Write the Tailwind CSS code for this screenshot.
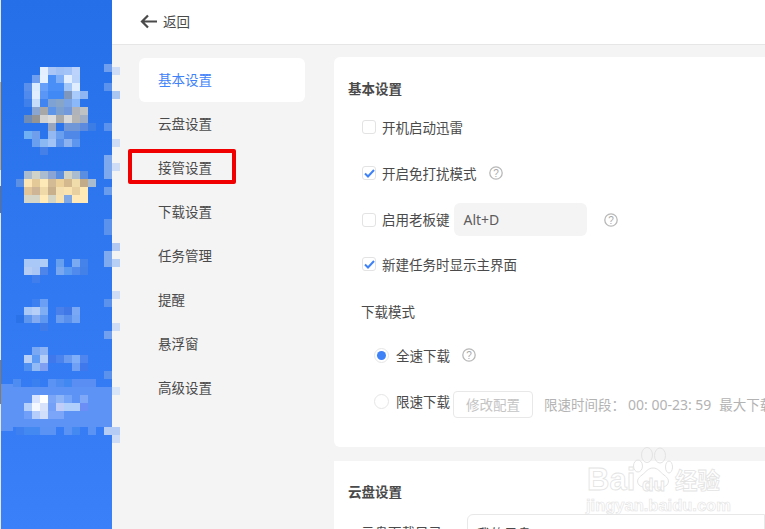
<!DOCTYPE html>
<html lang="zh">
<head>
    <meta charset="UTF-8" />
    <title>设置</title>
    <script src="https://cdn.jsdelivr.net/npm/@tailwindcss/browser@4"></script>
</head>
<body class="font-['Noto_Sans_CJK_SC',sans-serif] text-[13.5px] text-[#4a4a4a]">
<div class="relative flex h-[529px] w-[765px] overflow-hidden bg-[#f4f4f4]">

    <!-- blurred sidebar -->
    <svg class="w-[112px] h-[529px] shrink-0" viewBox="0 0 112 529" id="sidebar">
        <defs>
            <linearGradient id="side" x1="0" y1="0" x2="0" y2="1">
                <stop offset="0" stop-color="#2570e9" />
                <stop offset="1" stop-color="#3a80f8" />
            </linearGradient>
        </defs>
        <rect width="112" height="529" fill="url(#side)" />
        <rect width="1" height="529" fill="#e6e6e6" />
        <rect y="82" width="1" height="88" fill="#c8a560" />
        <rect y="186" width="1" height="27" fill="#6a6f78" />
        <rect y="360" width="1" height="44" fill="#8a7a60" />
        <rect x="1" y="387" width="111" height="40" fill="#5d93f5" />
        <rect x="1" y="384" width="12" height="47" fill="#5d93f5" />
        <g id="cells"></g>
    </svg>

    <!-- mosaic cells that spill over the sidebar edge -->
    <svg class="absolute left-[112px] top-0 w-[8px] h-[529px]" viewBox="0 0 8 529">
        <rect y="67" width="8" height="8" fill="#cfdcf5" />
        <rect y="91" width="8" height="8" fill="#a9c6f2" />
        <rect y="139" width="8" height="8" fill="#cfdcf5" />
        <rect y="163" width="8" height="8" fill="#cfdcf5" />
        <rect y="243" width="8" height="8" fill="#b0c8f2" />
        <rect y="259" width="8" height="8" fill="#b8cff5" />
        <rect y="291" width="8" height="8" fill="#cfdcf5" />
        <rect y="323" width="8" height="8" fill="#cfdcf5" />
        <rect y="387" width="8" height="8" fill="#d8e4f8" />
        <rect y="427" width="8" height="8" fill="#b5cdf5" />
        <rect y="435" width="8" height="8" fill="#cfdcf5" />
    </svg>

    <div class="flex-1 flex flex-col min-w-0">
        <!-- top bar -->
        <div class="h-[45px] shrink-0 bg-white border-b border-[#e6e6e6] flex items-center pl-[28px] pb-[2px] gap-[6px]">
            <svg class="w-[17px] h-[15px] text-[#4a4a4a]" viewBox="0 0 17 15" fill="none" stroke="currentColor" stroke-width="2.200">
                <path d="M17 7.500H2M8 1.500 2 7.500l6 6" />
            </svg>
            <span>返回</span>
        </div>

        <div class="flex flex-1 min-h-0">
            <!-- settings nav -->
            <div class="w-[222px] shrink-0 pl-[27px] pr-[29px] pt-[13px] flex flex-col">
                <div class="h-[44px] shrink-0 flex items-center pl-[19px] pb-[2px] bg-white rounded-md text-[#3f82f8]">基本设置</div>
                <div class="h-[44px] shrink-0 flex items-center pl-[19px] pb-[2px]">云盘设置</div>
                <div class="h-[44px] shrink-0 flex items-center pl-[19px] pb-[2px]">接管设置</div>
                <div class="h-[44px] shrink-0 flex items-center pl-[19px] pb-[2px]">下载设置</div>
                <div class="h-[44px] shrink-0 flex items-center pl-[19px] pb-[2px]">任务管理</div>
                <div class="h-[44px] shrink-0 flex items-center pl-[19px] pb-[2px]">提醒</div>
                <div class="h-[44px] shrink-0 flex items-center pl-[19px] pb-[2px]">悬浮窗</div>
                <div class="h-[44px] shrink-0 flex items-center pl-[19px] pb-[2px]">高级设置</div>
            </div>

            <!-- content -->
            <div class="flex-1 min-w-0 pt-[12px] flex flex-col gap-[14px]">
                <div class="h-[390px] shrink-0 bg-white rounded-l-md pl-[14px] pt-[21px] overflow-hidden">
                    <div class="font-bold leading-[20px]">基本设置</div>
                    <div class="pl-[14px] pt-[19px]">
                        <div class="h-[20px] flex items-center gap-[6px]">
                            <span class="w-[14px] h-[14px] shrink-0 rounded-[3px] border border-[#e3e3e3] bg-white"></span>
                            <span>开机启动迅雷</span>
                        </div>
                        <div class="h-[20px] mt-[26px] flex items-center gap-[6px]">
                            <span class="w-[14px] h-[14px] shrink-0 rounded-[3px] border border-[#e3e3e3] bg-white flex items-center justify-center">
                                <svg class="w-[11px] h-[9px]" viewBox="0 0 11 9" fill="none" stroke="#3f82f8" stroke-width="2"><path d="M1 4.500 4 7.500 10 1" /></svg>
                            </span>
                            <span>开启免打扰模式</span>
                            <svg class="w-[14px] h-[14px] ml-[6px] shrink-0" viewBox="0 0 14 14" fill="none"><circle cx="7" cy="7" r="6.200" stroke="#b8b8b8" stroke-width="1.300" /><text x="7" y="10.700" text-anchor="middle" font-size="10" fill="#a8a8a8" font-family="Liberation Sans">?</text></svg>
                        </div>
                        <div class="h-[33px] mt-[20px] flex items-center">
                            <span class="w-[14px] h-[14px] shrink-0 rounded-[3px] border border-[#e3e3e3] bg-white mr-[6px]"></span>
                            <span>启用老板键</span>
                            <span class="w-[133px] h-[33px] shrink-0 ml-[4px] rounded-md bg-[#f4f4f4] flex items-center pl-[10px] font-['Noto_Sans',sans-serif] text-[14px] text-[#5c5c5c]">Alt+D</span>
                            <svg class="w-[14px] h-[14px] ml-[17px] shrink-0" viewBox="0 0 14 14" fill="none"><circle cx="7" cy="7" r="6.200" stroke="#b8b8b8" stroke-width="1.300" /><text x="7" y="10.700" text-anchor="middle" font-size="10" fill="#a8a8a8" font-family="Liberation Sans">?</text></svg>
                        </div>
                        <div class="h-[20px] mt-[18px] flex items-center gap-[6px]">
                            <span class="w-[14px] h-[14px] shrink-0 rounded-[3px] border border-[#e3e3e3] bg-white flex items-center justify-center">
                                <svg class="w-[11px] h-[9px]" viewBox="0 0 11 9" fill="none" stroke="#3f82f8" stroke-width="2"><path d="M1 4.500 4 7.500 10 1" /></svg>
                            </span>
                            <span>新建任务时显示主界面</span>
                        </div>
                        <div class="h-[20px] mt-[27px] flex items-center -ml-px">下载模式</div>
                        <div class="h-[20px] mt-[24px] pl-[12px] flex items-center gap-[7px]">
                            <span class="w-[15px] h-[15px] shrink-0 rounded-full border border-[#e6e6e6] bg-white flex items-center justify-center">
                                <span class="w-[9px] h-[9px] rounded-full bg-[#3f82f8]"></span>
                            </span>
                            <span>全速下载</span>
                            <svg class="w-[14px] h-[14px] ml-[5px] shrink-0" viewBox="0 0 14 14" fill="none"><circle cx="7" cy="7" r="6.200" stroke="#b8b8b8" stroke-width="1.300" /><text x="7" y="10.700" text-anchor="middle" font-size="10" fill="#a8a8a8" font-family="Liberation Sans">?</text></svg>
                        </div>
                        <div class="h-[27px] mt-[23px] pl-[12px] flex items-center whitespace-nowrap">
                            <span class="w-[15px] h-[15px] shrink-0 rounded-full border border-[#e6e6e6] bg-white mr-[7px]"></span>
                            <span class="shrink-0">限速下载</span>
                            <span class="shrink-0 ml-[3px] mt-[6px] w-[80px] h-[27px] rounded-[4px] border border-[#e8e8e8] text-[#c4c4c4] flex items-center justify-center">修改配置</span>
                            <span class="shrink-0 ml-[11px] mt-[6px] text-[#b3b3b3]">限速时间段：</span>
                            <span class="shrink-0 ml-[3px] mt-[6px] text-[#b3b3b3] text-[14px] font-['Noto_Sans',sans-serif]">00: 00-23: 59</span>
                            <span class="shrink-0 ml-[8px] mt-[6px] text-[#b3b3b3]">最大下载速度</span>
                        </div>
                    </div>
                </div>
                <div class="flex-1 bg-white pl-[14px] pt-[20px]">
                    <div class="font-bold leading-[20px]">云盘设置</div>
                    <div class="pl-[13px] mt-[13px] flex items-start">
                        <span class="w-[106px] pt-[8px] leading-[20px] shrink-0">云盘下载目录</span>
                        <span class="flex-1 h-[33px] rounded-l-md border border-[#e8e8e8] pl-[9px] leading-[36px]">我的云盘</span>
                    </div>
                </div>
            </div>
        </div>
    </div>

    <!-- annotation -->
    <div class="absolute left-[128px] top-[149px] w-[108px] h-[35px] border-4 border-[#f00000] rounded-[2px]"></div>

    <!-- watermark -->
    <div class="absolute left-[586px] top-[447px] w-[150px] h-[70px]">
        <svg class="absolute left-[47px] top-0 w-[40px] h-[46px]" viewBox="0 0 40 46" fill="none" stroke="#e3e3e3" stroke-width="1">
            <ellipse cx="14" cy="8" rx="5.500" ry="7.500" />
            <ellipse cx="27" cy="8.500" rx="5.500" ry="7.500" />
            <ellipse cx="5" cy="19" rx="4.500" ry="6" />
            <ellipse cx="36" cy="20" rx="3.500" ry="6" />
            <path d="M20 21c5 0 7 4 11 7 4 3 6 6 3 10-3 3-8 2-14 2s-11 1-14-2c-3-4-1-7 3-10 4-3 6-7 11-7z" fill="white" />
        </svg>
        <span class="absolute left-[1px] top-[15px] font-['Liberation_Sans',sans-serif] text-[31px] leading-[36px] font-bold text-white [-webkit-text-stroke:0.8px_#e3e3e3]">Bai</span>
        <span class="absolute left-[56px] top-[26px] font-['Liberation_Sans',sans-serif] text-[19px] leading-[24px] font-bold text-white [-webkit-text-stroke:0.8px_#e3e3e3]">du</span>
        <span class="absolute left-[89px] top-[14px] text-[22.500px] leading-[36px] font-bold text-white [-webkit-text-stroke:0.8px_#e3e3e3]">经验</span>
        <span class="absolute left-0 top-[48px] font-['Liberation_Sans',sans-serif] text-[16.500px] leading-[20px] font-bold text-white [-webkit-text-stroke:0.6px_#e3e3e3]">jingyan.baidu.com</span>
    </div>
</div>

<script>
    // mosaic cells of the blurred sidebar: [y, [x, colour], ...]
    const rows = [
        [67, [40,'#e3efff'],[48,'#a9c6f7'],[56,'#9fc0f5'],[64,'#a2c3f8'],[72,'#bcd4fb']],
        [75, [32,'#6f9fee'],[40,'#e6f1ff'],[48,'#4a8ff5'],[56,'#7fb0f7'],[64,'#e3efff'],[72,'#b8d2fa']],
        [83, [24,'#5a90ec'],[32,'#dcecff'],[40,'#66a0f8'],[48,'#4a8ff8'],[56,'#4a8ff8'],[64,'#a3c6f8'],[72,'#e0edff']],
        [91, [24,'#4f8aec'],[32,'#e0eeff'],[40,'#5996f6'],[48,'#418af5'],[56,'#418af5'],[64,'#8097bd'],[72,'#a9cbfb'],[80,'#8fb5f2']],
        [99, [24,'#3f80ea'],[32,'#c5dcfa'],[40,'#3f84f0'],[48,'#7fa2d5'],[56,'#86a5c8'],[64,'#7aa4e3'],[72,'#8ab8f8']],
        [107, [32,'#8aa5d0'],[40,'#a8a8a8'],[48,'#5f95e8'],[56,'#7ca0d0'],[64,'#7299dc'],[72,'#b0b4ba'],[80,'#bfc2c5']],
        [115, [24,'#6e8cb5'],[32,'#949494'],[40,'#d2d2d2'],[48,'#dcdcdc'],[56,'#aaaaaa'],[64,'#d8d8d8'],[72,'#b5b5b5'],[80,'#9fadc5']],
        [123, [48,'#98a5bc'],[64,'#7097d8'],[72,'#7097d8'],[80,'#5b8ade'],[88,'#3c7ce5']],
        [131, [24,'#6fb0f5'],[32,'#6f9fec'],[48,'#94b8f2'],[56,'#6a9fef'],[64,'#5088e8'],[72,'#5088e8']],
        [139, [32,'#6a9eee'],[40,'#8ab8f2'],[48,'#a2c3f5'],[56,'#5a92ec'],[64,'#8db2f0'],[72,'#5c96ee']],
        [147, [40,'#4480e8']],
        [171, [24,'#a9bccf'],[32,'#cfd2c8'],[40,'#a9bcd0'],[48,'#8aa5d5'],[56,'#5a8ee0'],[64,'#d0d2c5'],[72,'#a9bcd0'],[80,'#5a8ee0']],
        [179, [16,'#5c90e4'],[24,'#fde6b5'],[32,'#e3c898'],[40,'#fde9b8'],[48,'#d3bb95'],[56,'#ecd09a'],[64,'#d5b98e'],[72,'#f0dcaa'],[80,'#c2ab88'],[88,'#a9bccf']],
        [187, [24,'#e0c49a'],[32,'#cdb595'],[40,'#efd9a8'],[48,'#c9b08c'],[56,'#f3dfb0'],[64,'#fbe3b0'],[72,'#e8d0a0'],[80,'#ffe9b5']],
        [195, [24,'#d5d5c8'],[32,'#d5d5c8'],[40,'#ffeab8'],[48,'#d5d5c5'],[56,'#f8e3b0'],[64,'#7fa8e5'],[72,'#ffe9b8'],[80,'#ffe9b8']],
        [259, [24,'#a9c8f8'],[32,'#a9c8f8'],[40,'#b0cdf8'],[56,'#68a0f0'],[72,'#7aaaf2'],[80,'#4583ea']],
        [267, [24,'#b5cdf5'],[32,'#a9c6f5'],[40,'#4d85ea'],[56,'#7aa8f0'],[64,'#5a9af0'],[72,'#4f8aec'],[80,'#4380e8']],
        [275, [32,'#3f7eec']],
        [299, [32,'#3f80f0'],[40,'#6a9ff5']],
        [307, [24,'#a9c8f8'],[32,'#b5cff8'],[40,'#80aef5'],[56,'#4a80ea'],[64,'#4078e8'],[72,'#7aa8f5']],
        [315, [16,'#2a72e8'],[24,'#5c96ee'],[32,'#82abf2'],[40,'#5f98f0'],[56,'#6a9cf0'],[64,'#5990ee'],[72,'#74a5f4']],
        [323, [40,'#3f7cea']],
        [347, [32,'#7aa8f2'],[40,'#8eb4f5']],
        [355, [24,'#b8d0f8'],[32,'#5f9cf5'],[40,'#b5cef8'],[48,'#3f78ec'],[56,'#4a82ee'],[64,'#689af2'],[72,'#80aef8'],[80,'#4f85ee']],
        [363, [24,'#4f90f0'],[32,'#92bbf5'],[40,'#7fa0f2'],[72,'#6fa0f5'],[80,'#3f78ec']],
        [379, [13,'#4f8cf2'],[32,'#3b80f0'],[48,'#5a93f4'],[56,'#4f8cf2'],[64,'#4288f2'],[72,'#5a8ef3'],[80,'#5a8ef3'],[88,'#5a8ef3']],
        [395, [32,'#d8e4ff'],[40,'#ffffff'],[48,'#7ba6f8'],[56,'#8eb4f8'],[64,'#74a5f8'],[80,'#80a8f8']],
        [403, [24,'#b5d0fb'],[32,'#f5f9ff'],[40,'#d8e2fb'],[48,'#75a0f8'],[56,'#c0cdf8'],[64,'#b0d0fb'],[72,'#b0d0fb'],[80,'#6a8ef5']],
        [411, [24,'#6f9ff8'],[32,'#b5cdfa'],[40,'#d0defb'],[48,'#7ba5f8'],[56,'#7ba5f8']],
        [427, [16,'#3f80f0'],[24,'#4488f2'],[32,'#4488f2'],[40,'#5a93f4'],[48,'#5a93f4'],[64,'#5a93f4'],[72,'#4488f2'],[88,'#5a93f4']],
        // column that runs along the right edge
        [64, [104,'#6f9eee']],[83, [104,'#5a92ee']],[123, [104,'#5a92ee']],[155, [104,'#7fa9ee']],[163, [104,'#7fa9ee']],[171, [104,'#7fa9ee']],
        [187, [104,'#6a9cee']],[219, [104,'#5a92ee']],[227, [104,'#5a92ee']],[251, [104,'#80aaf0']],[259, [104,'#80aaf0']],
        [299, [104,'#5a92ee']],[331, [104,'#72a0f0']],[371, [104,'#5a92ee']],[427, [104,'#b5cdf5']]
    ];
    const ns = 'http://www.w3.org/2000/svg';
    const cells = document.getElementById('cells');
    rows.forEach(([y, ...row]) => row.forEach(([x, fill]) => {
        const r = document.createElementNS(ns, 'rect');
        r.setAttribute('x', x); r.setAttribute('y', y);
        r.setAttribute('width', 8); r.setAttribute('height', 8);
        r.setAttribute('fill', fill);
        cells.appendChild(r);
    }));
</script>
</body>
</html>
